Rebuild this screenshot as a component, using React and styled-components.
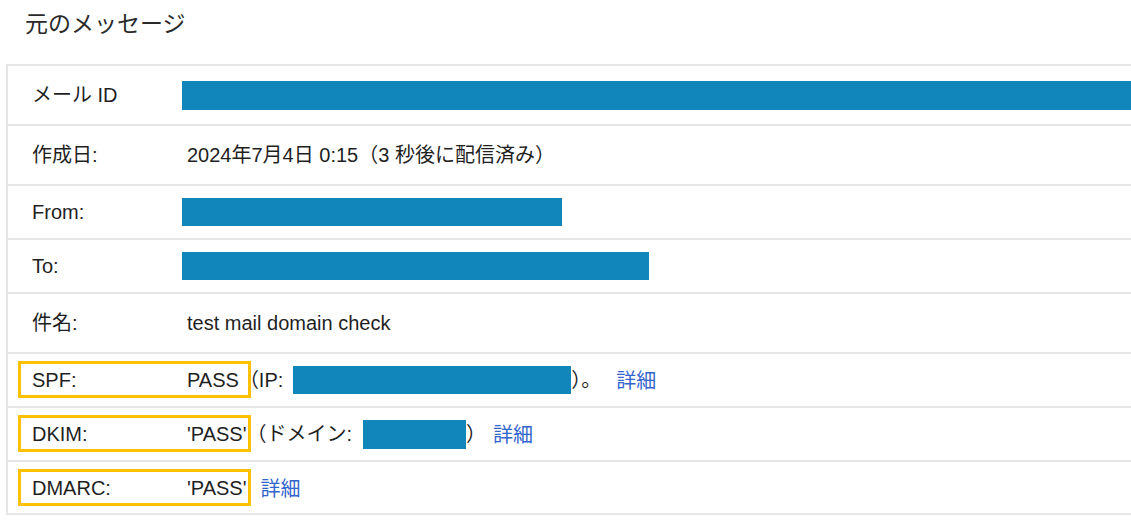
import React from "react";
import styled, { createGlobalStyle } from "styled-components";

const GlobalStyle = createGlobalStyle`
  html, body {
    margin: 0;
    padding: 0;
    background: #ffffff;
    overflow: hidden;
  }
  body {
    font-family: "Liberation Sans", Arial, "Noto Sans CJK JP", sans-serif;
    color: #1f1f1f;
  }
`;

const Page = styled.div`
  width: 1131px;
  height: 529px;
  overflow: hidden;
`;

const Title = styled.h2`
  margin: 0;
  padding: 6px 0 0 25px;
  height: 64px;
  box-sizing: border-box;
  font-family: "Noto Sans CJK JP", sans-serif;
  font-weight: 400;
  font-size: 23px;
  line-height: 33px;
  color: #2a2a2a;
`;

const Table = styled.div`
  margin-left: 6px;
  width: 1125px;
  border-top: 2px solid #e6e6e6;
  border-left: 2px solid #e6e6e6;
  display: flex;
  flex-direction: column;
`;

const Row = styled.div`
  position: relative;
  box-sizing: border-box;
  height: ${(p) => p.$height}px;
  display: flex;
  align-items: center;
  padding-left: 24px;
  border-bottom: 2px solid #e6e6e6;
  font-size: 20px;
  line-height: 24px;
  overflow: hidden;
`;

const Label = styled.div`
  width: 155px;
  flex-shrink: 0;
  white-space: nowrap;
`;

const Value = styled.div`
  display: flex;
  align-items: center;
  white-space: pre;
`;

const Redacted = styled.span`
  display: inline-block;
  flex-shrink: 0;
  width: ${(p) => p.$w}px;
  height: ${(p) => p.$h}px;
  margin-left: ${(p) => p.$shift || 0}px;
  background: #1186bb;
`;

const Link = styled.span`
  margin-left: ${(p) => p.$gap}px;
  color: #3366cc;
  font-family: "Noto Sans CJK JP", sans-serif;
`;

const Highlight = styled.div`
  position: absolute;
  left: 10px;
  top: 7px;
  width: 233px;
  height: 37px;
  box-sizing: border-box;
  border: 3px solid #ffc000;
  pointer-events: none;
  z-index: 1;
`;

const rows = [
  { label: "メール ID", height: 60, value: <Redacted $w={960} $h={29} $shift={-5} /> },
  { label: "作成日:", height: 60, value: "2024年7月4日 0:15（3 秒後に配信済み）" },
  { label: "From:", height: 54, value: <Redacted $w={380} $h={28} $shift={-5} /> },
  { label: "To:", height: 54, value: <Redacted $w={467} $h={28} $shift={-5} /> },
  { label: "件名:", height: 60, value: "test mail domain check" },
];

const App = () => {
  return (
    <>
      <GlobalStyle />
      <Page>
        <Title>元のメッセージ</Title>
        <Table>
          {rows.map((row) => (
            <Row key={row.label} $height={row.height}>
              <Label>{row.label}</Label>
              <Value>{row.value}</Value>
            </Row>
          ))}

          <Row $height={54}>
            <Highlight />
            <Label>SPF:</Label>
            <Value>
              PASS（IP:
              <Redacted $w={278} $h={28} $shift={10} />
              ）。<Link $gap={15}>詳細</Link>
            </Value>
          </Row>
          <Row $height={54}>
            <Highlight />
            <Label>DKIM:</Label>
            <Value>
              'PASS'（ドメイン:
              <Redacted $w={103} $h={29} $shift={11} />
              ）<Link $gap={7}>詳細</Link>
            </Value>
          </Row>
          <Row $height={53}>
            <Highlight />
            <Label>DMARC:</Label>
            <Value>
              'PASS'<Link $gap={14}>詳細</Link>
            </Value>
          </Row>
        </Table>
      </Page>
    </>
  );
};

export default App;
